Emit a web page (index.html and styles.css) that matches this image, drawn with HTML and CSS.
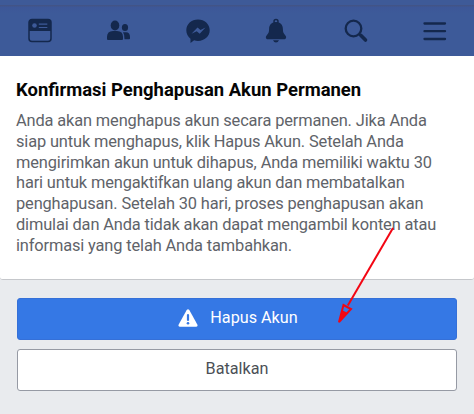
FILE: index.html
```
<!DOCTYPE html>
<html lang="id">
<head>
<meta charset="utf-8">
<title>Konfirmasi Penghapusan Akun Permanen</title>
<link rel="stylesheet" href="styles.css">
</head>
<body>
<div class="page">
  <nav class="topbar">
    <svg class="icon" viewBox="0 0 32 32"><rect x="5" y="4.500" width="22" height="22" rx="3" fill="none" stroke="currentColor" stroke-width="1.500"/><path d="M5 16V7.500q0-3 3-3h16q3 0 3 3V16z" fill="currentColor"/><circle cx="10.500" cy="10.500" r="2.300" class="cut"/><path d="M14.800 9.200h8.500M14.800 12.500h8.500" class="cut-line"/></svg>
    <svg class="icon" viewBox="0 0 32 32"><g fill="currentColor"><ellipse cx="12" cy="10.500" rx="4.300" ry="5"/><path d="M4 24v-2q0-6 6-6h4q6 0 6 6v2q0 1-1 1H5q-1 0-1-1z"/><ellipse cx="22" cy="12.500" rx="3.100" ry="3.500"/><path d="M20 17.200h3q4 0 4 5v1.300q0 .8-1 .8h-4.500q.3-4.500-1.500-7.100z"/></g></svg>
    <svg class="icon" viewBox="0 0 32 32"><path d="M16 4.500c-6.600 0-11.700 4.600-11.700 10.800 0 3.500 1.600 6.500 4.200 8.400v4.200l3.600-2.600c1.200.4 2.500.6 3.900.6 6.600 0 11.700-4.500 11.700-10.600S22.600 4.500 16 4.500z" fill="currentColor"/><path d="M9.500 18.700l6-6.100 3 2.500 5-2.500-5.800 6.100-3-2.500z" class="cut"/></svg>
    <svg class="icon bell" viewBox="0 0 32 32"><circle cx="16" cy="6.500" r="2" fill="none" stroke="currentColor" stroke-width="1.500"/><path d="M16 7c-4.500 0-6.900 3-6.900 7 0 3-.5 4.300-2.300 6.200-1.800 1.800-.8 4 1.200 4h16c2 0 3-2.200 1.200-4-1.800-1.900-2.300-3.200-2.300-6.200 0-4-2.400-7-6.900-7zM13 25.300h6q-1 2.200-3 2.200t-3-2.200z" fill="currentColor"/></svg>
    <svg class="icon" viewBox="0 0 32 32"><circle cx="13.500" cy="13.500" r="7.800" fill="none" stroke="currentColor" stroke-width="2.300"/><path d="M19.200 19.200l1.800 1.800" stroke="currentColor" stroke-width="2.300"/><path d="M21 20.500l4.500 4.500" stroke="currentColor" stroke-width="3.600" stroke-linecap="round"/></svg>
    <svg class="icon" viewBox="0 0 32 32"><path d="M5.500 8.500h20.500M5.500 16.200h20.500M5.500 24h20.500" stroke="currentColor" stroke-width="2.300" stroke-linecap="round"/></svg>
  </nav>
  <main class="message">
    <h1>Konfirmasi Penghapusan Akun Permanen</h1>
    <p>Anda akan menghapus akun secara permanen. Jika Anda<br>siap untuk menghapus, klik Hapus Akun. Setelah Anda<br>mengirimkan akun untuk dihapus, Anda memiliki waktu 30<br>hari untuk mengaktifkan ulang akun dan membatalkan<br>penghapusan. Setelah 30 hari, proses penghapusan akan<br>dimulai dan Anda tidak akan dapat mengambil konten atau<br>informasi yang telah Anda tambahkan.</p>
  </main>
  <div class="actions">
    <button class="button primary"><svg class="warning" viewBox="0 0 20 18"><path d="M8.700 1q1.300-1.700 2.600 0l8 14.500q.9 2-1 2.200H1.700q-1.900-.2-1-2.200z" fill="currentColor"/><path d="M10 6v5" stroke="#3578e5" stroke-width="2.200" stroke-linecap="round"/><circle cx="10" cy="14.200" r="1.300" fill="#3578e5"/></svg><span>Hapus Akun</span></button>
    <button class="button secondary">Batalkan</button>
  </div>
  <svg class="pointer" viewBox="0 0 62 100"><path d="M60 3L14.800 80.500" stroke="#f30613" stroke-width="2" fill="none"/><path d="M6 97L10.500 80l7.500 4z" stroke="#f30613" stroke-width="2" fill="none"/><path d="M5.500 98l3.500-13 5.500 3z" fill="#f30613"/></svg>
</div>
</body>
</html>
```

FILE: styles.css
```
* { box-sizing: border-box; }
body { margin: 0; background: #e9ebee; font-family: Roboto, "Liberation Sans", sans-serif; }
.page { position: relative; width: 474px; height: 414px; overflow: hidden; display: flex; flex-direction: column; }
.topbar {
  flex: none; height: 56px; padding: 5px 0 0 1px; display: grid; grid-template-columns: repeat(6, 79.200px);
  justify-content: center; align-items: center; justify-items: center;
  background: linear-gradient(#3e5a98 0 5px, #425487 5px 6px, #3d5798 7px, #3d5a99 14px);
  color: #14284d;
}
.icon { width: 32px; height: 32px; }
.bell { margin-right: 2px; }
.cut { fill: #3d5a99; }
.cut-line { stroke: #3d5a99; stroke-width: 1.200; }
.message {
  flex: none; height: 224px; padding: 22px 16px 0; background: #fff;
  border-bottom: 1px solid #c5c7cb; border-radius: 0 0 3px 3px;
}
h1 { margin: 0; font-size: 18.450px; line-height: 24px; font-weight: 700; color: #050505; white-space: nowrap; }
p { margin: 9px 0 0; font-size: 16.400px; letter-spacing: -.135px; line-height: 20.800px; color: #606369; white-space: nowrap; }
.actions { display: flex; flex-direction: column; gap: 9px; padding: 18px 17px 0; }
.button { height: 42px; border-radius: 3px; padding: 0 0 3px; font: 16.200px Roboto, "Liberation Sans", sans-serif; display: flex; align-items: center; justify-content: center; }
.primary { border: 1px solid #3570d8; background: #3578e5; color: #fff; gap: 12px; padding-left: 2px; }
.secondary { border: 1px solid #969aa4; background: #fff; color: #4b4f56; }
.warning { width: 20px; height: 18px; }
.pointer { position: absolute; left: 333px; top: 225px; width: 62px; height: 100px; }
```
